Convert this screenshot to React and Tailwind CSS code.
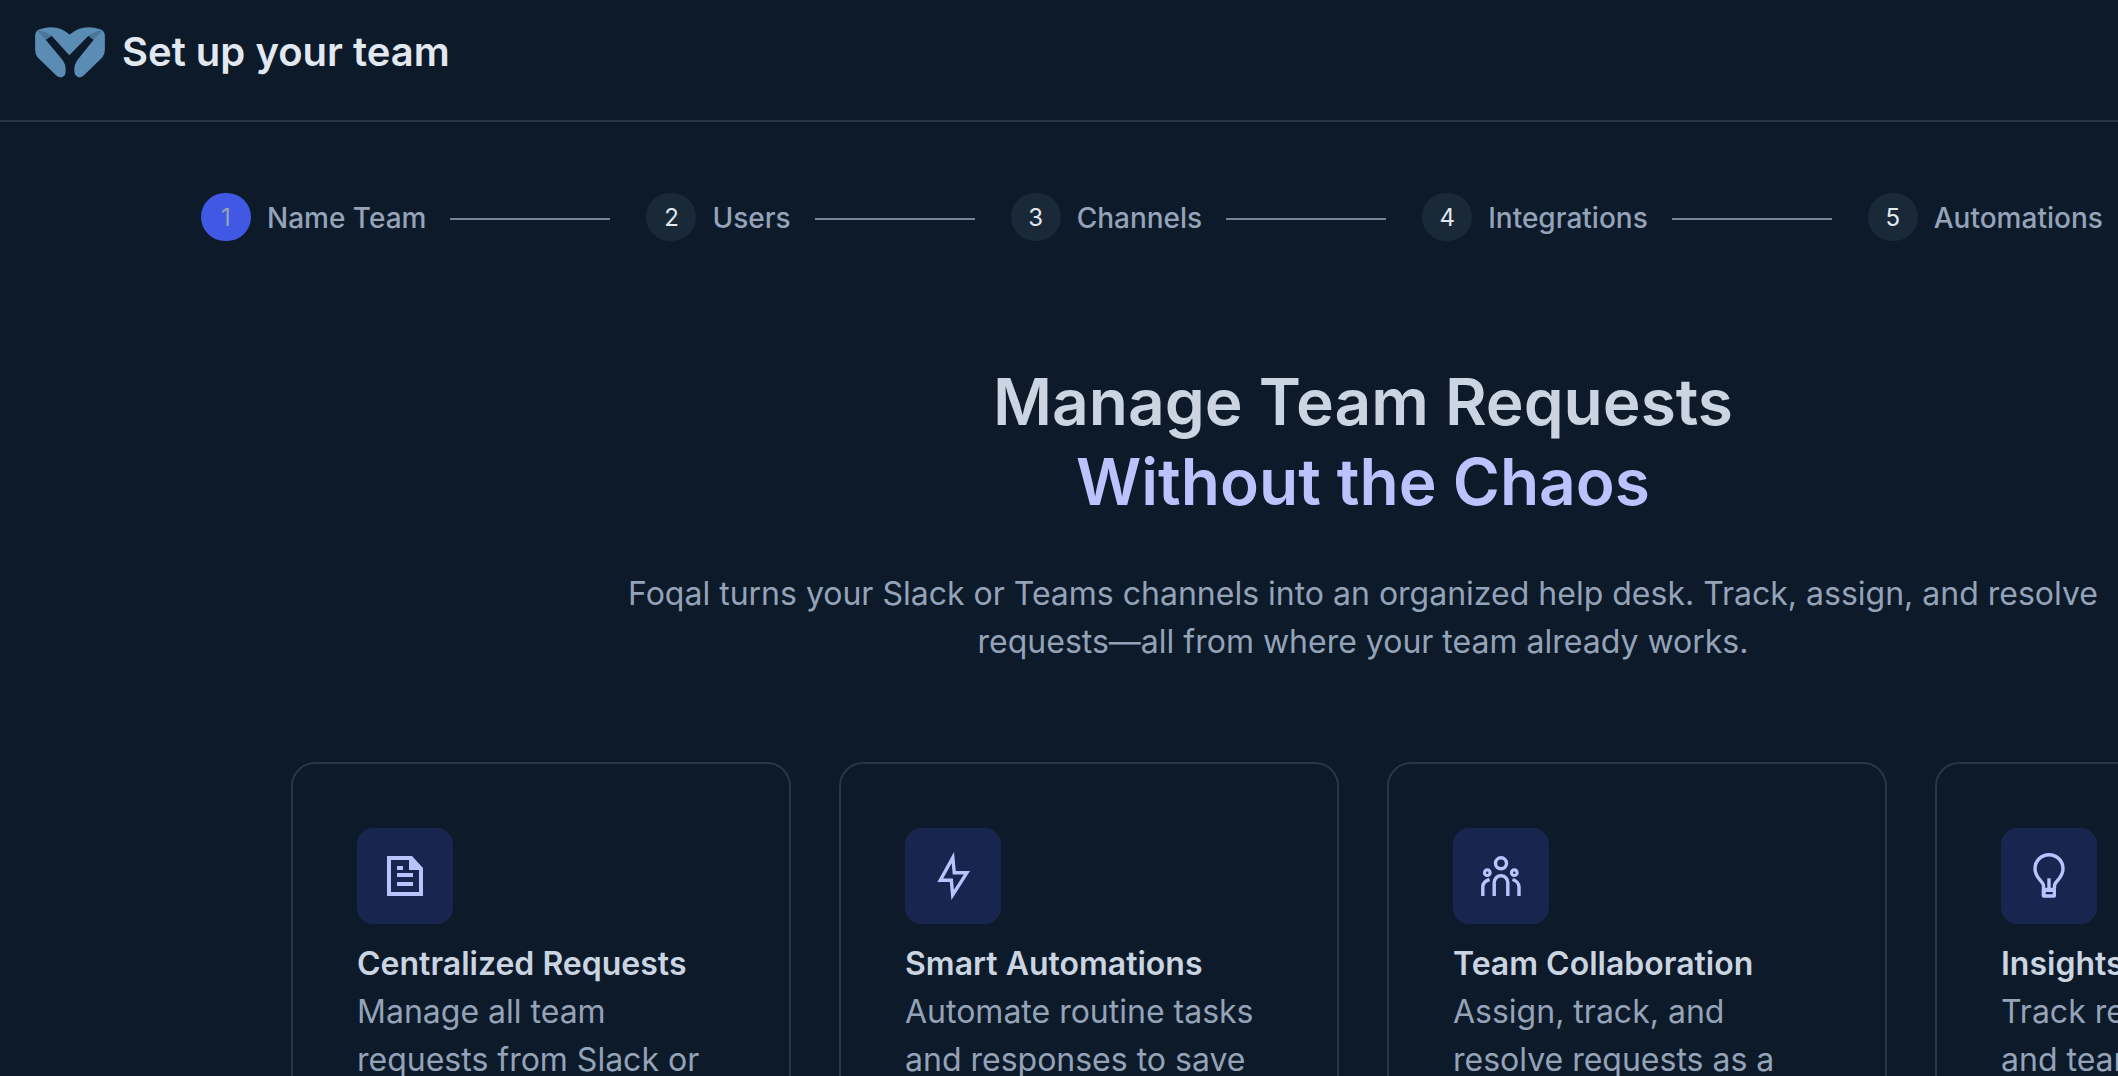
import React from 'react';

const steps = [
  { n: 1, label: 'Name Team', active: true },
  { n: 2, label: 'Users' },
  { n: 3, label: 'Channels' },
  { n: 4, label: 'Integrations' },
  { n: 5, label: 'Automations' },
];

const Logo = () => (
  <svg width="72" height="52" viewBox="42 48 216 158">
    <path
      d="M44 80 Q44 62 58 58 Q110 40 149 74 Q188 40 242 58 Q256 62 256 80 L256 120 Q256 134 248 144 L190 200 Q176 210 167 198 L150 170 L134 198 Q124 210 110 200 L52 144 Q44 134 44 120 Z"
      fill="#5b8cb3"
    />
    <path
      d="M76 90 L94 78 L148 137 L206 78 L222 90 L172 152 Q160 168 164 192 L168 210 L132 210 L136 192 Q140 168 128 152 Z"
      fill="#0c1a2a"
    />
    <path d="M50 62 L76 90 L94 78 Q72 62 50 62 Z" fill="#4a7699" />
    <path d="M250 62 L222 90 L206 78 Q228 62 250 62 Z" fill="#4a7699" />
  </svg>
);

const FileIcon = () => (
  <svg width="48" height="48" viewBox="0 0 24 24" fill="#bbc3ff">
    <path fillRule="evenodd" d="M3 2h12.5L21 8v14H3z M5 4v16h14V9h-5V4z" />
    <path d="M8 7h3v2H8z M8 10.5h8v2H8z M8 15h8v2H8z" />
  </svg>
);

const BoltIcon = () => (
  <svg width="48" height="48" viewBox="0 0 24 24" fill="#bbc3ff">
    <path
      fillRule="evenodd"
      d="M12.5 0 L13.4 9.5 H20.5 L11.2 24 L10.4 15 H4.2 Z M11.34 5.6 L11.86 11.2 H17.4 L12.45 18.9 L11.95 13.3 H7.08 Z"
    />
  </svg>
);

const TeamIcon = () => (
  <svg width="48" height="48" viewBox="0 0 48 48" fill="none" stroke="#bbc3ff" strokeWidth="3.4">
    <circle cx="24" cy="11.3" r="5.5" />
    <circle cx="10.3" cy="20.7" r="2.8" strokeWidth="3.2" />
    <circle cx="37.3" cy="20.7" r="2.8" strokeWidth="3.2" />
    <path d="M17.2 44 V30.6 a6.8 6.8 0 0 1 13.6 0 V44" />
    <path d="M5.8 44 V35 Q5.8 29.5 12.5 27.5" />
    <path d="M42 44 V35 Q42 29.5 35.5 27.5" />
  </svg>
);

const BulbIcon = () => (
  <svg width="48" height="48" viewBox="0 0 48 48" fill="none" stroke="#bbc3ff" strokeWidth="3.4">
    <path d="M18.5 36 V33.5 C18 29 10 26 10 16.7 A14 14 0 0 1 38 16.7 C38 26 30 29 29.5 33.5 V36" />
    <path d="M24 26.3 V36" />
    <path
      fillRule="evenodd"
      stroke="none"
      fill="#bbc3ff"
      d="M18 35.7 H30 Q31 35.7 31 37 V44 Q31 45.7 29 45.7 H19 Q16.7 45.7 16.7 44 V37 Q16.7 35.7 18 35.7 Z M20.7 40 V42.3 H27.7 V40 Z"
    />
  </svg>
);

const features = [
  {
    title: 'Centralized Requests',
    text: 'Manage all team requests from Slack or Teams in one place.',
    icon: <FileIcon />,
  },
  {
    title: 'Smart Automations',
    text: 'Automate routine tasks and responses to save your team time.',
    icon: <BoltIcon />,
  },
  {
    title: 'Team Collaboration',
    text: 'Assign, track, and resolve requests as a team without the noise.',
    icon: <TeamIcon />,
  },
  {
    title: 'Insights & Analytics',
    text: 'Track request trends and team performance over time.',
    icon: <BulbIcon />,
  },
];

export default function App() {
  return (
    <div className="h-[1076px] w-[2118px] overflow-hidden bg-[#0c1a2a] font-['Inter',sans-serif]">
      {/* Header */}
      <div className="flex h-[122px] items-start gap-4 border-b-2 border-[#2a3644] pl-[34px] pt-[26px]">
        <Logo />
        <h1 className="text-[40px] leading-[52px] font-semibold text-[#e2e8f0]">Set up your team</h1>
      </div>

      {/* Stepper */}
      <div className="flex h-12 mt-[71px] items-center pl-[201px]">
        {steps.map((step, i) => (
          <React.Fragment key={step.n}>
            <div
              className={`flex h-12 w-[50px] shrink-0 items-center justify-center rounded-full text-[24px] ${
                step.active ? 'bg-[#4158e4] text-[#94a3b8]' : 'bg-[#1a2938] text-[#e2e8f0]'
              }`}
            >
              <span className="pt-0.5">{step.n}</span>
            </div>
            <span className="ml-4 shrink-0 pt-0.5 text-[28px] leading-[44px] font-medium text-[#94a3b8]">
              {step.label}
            </span>
            {i < steps.length - 1 && <div className="ml-6 mr-9 mt-[3px] h-0.5 w-40 shrink-0 bg-[#76859a]"></div>}
          </React.Fragment>
        ))}
      </div>

      {/* Intro and feature cards */}
      <div className="ml-[291px] w-[2144px]">
        <h2 className="mt-[121px] text-center text-[64px] leading-[80px] font-semibold text-[#cbd5e1]">
          Manage Team Requests
          <br />
          <span className="text-[#bbc3ff]">Without the Chaos</span>
        </h2>
        <p className="mx-auto mt-12 max-w-[1500px] text-center text-[32px] leading-[48px] text-[#94a3b8]">
          Foqal turns your Slack or Teams channels into an organized help desk. Track, assign, and resolve
          requests—all from where your team already works.
        </p>
        <div className="mt-24 grid grid-cols-4 gap-12">
          {features.map(f => (
            <div key={f.title} className="h-[500px] rounded-3xl border-2 border-[#2a3644] bg-[#0d1a2a] p-16">
              <div className="flex h-24 w-24 items-center justify-center rounded-2xl bg-[#18264f]">{f.icon}</div>
              <h3 className="mt-4 text-[32px] leading-[48px] font-semibold text-[#cbd5e1]">{f.title}</h3>
              <p className="text-[32px] leading-[48px] text-[#94a3b8]">{f.text}</p>
            </div>
          ))}
        </div>
      </div>
    </div>
  );
}
